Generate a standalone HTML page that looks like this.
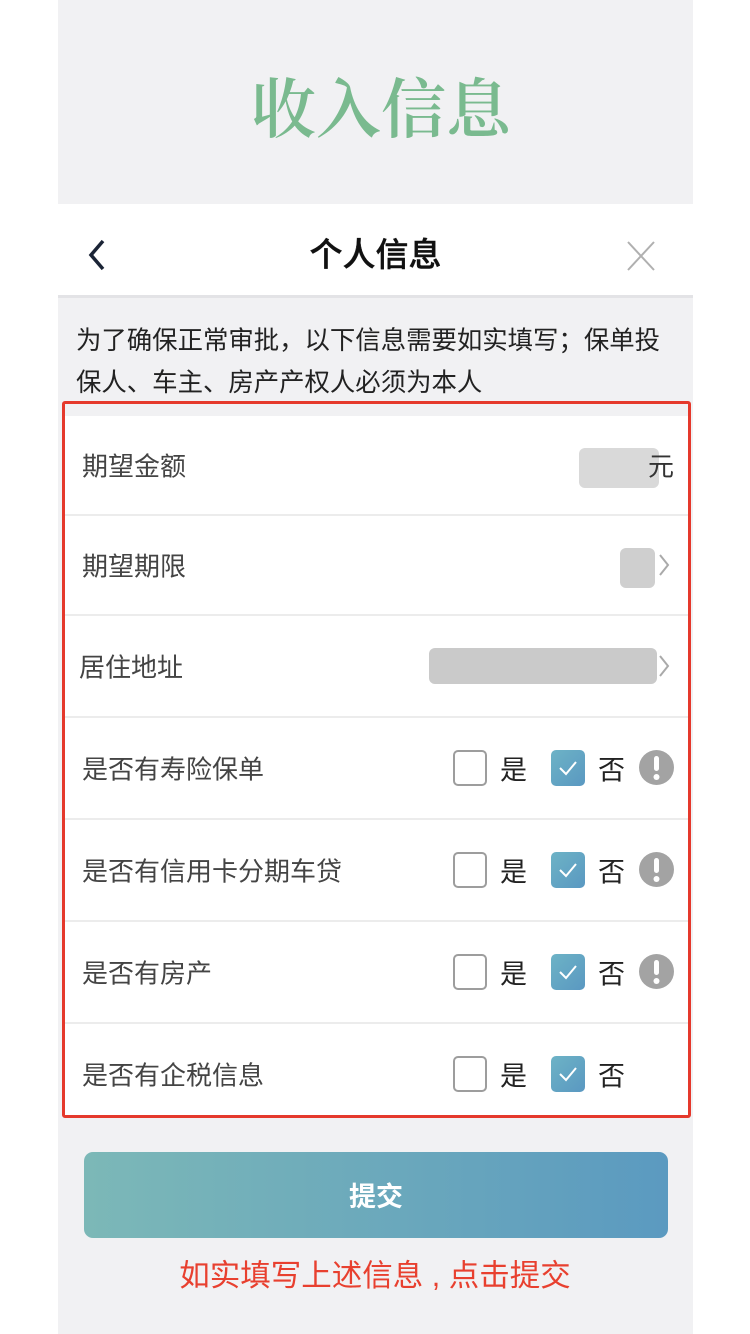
<!DOCTYPE html>
<html><head><meta charset="utf-8"><style>
*{margin:0;padding:0;box-sizing:border-box}
body{width:750px;height:1334px;background:#fff;font-family:"Liberation Sans","Noto Sans CJK SC",sans-serif;position:relative;overflow:hidden}
.col{position:absolute;left:58px;top:0;width:635px;height:1334px;background:#f1f1f3}
.title{position:absolute;left:6px;width:750px;top:62px;text-align:center;font-family:"Noto Serif CJK SC",serif;font-weight:600;font-size:65px;line-height:84px;color:#7aba8f}
.nav{position:absolute;left:58px;top:204px;width:635px;height:94px;background:#fff;border-bottom:3px solid #e3e3e6}
.nav .t{position:absolute;left:0;width:100%;text-align:center;top:31px;font-size:33px;line-height:40px;color:#111;font-weight:500;-webkit-text-stroke:0.4px #111}
.intro{position:absolute;left:76px;top:320px;width:592px;font-size:25.4px;line-height:42px;color:#222}
.box{position:absolute;left:62px;top:401px;width:629px;height:717px;border:3px solid #e5392c;border-radius:3px;background:#fff}
.strip{position:absolute;left:0;top:0;width:100%;height:12px;background:#f1f1f3}
.row{position:absolute;left:0;width:100%;border-bottom:2px solid #ececec}
.lab{position:absolute;left:17px;font-size:26px;color:#444;top:50%;transform:translateY(-50%)}
.cb{position:absolute;width:34px;height:36px;border-radius:5px;top:50%;margin-top:-18px}
.un{left:388px;border:2.5px solid #9d9d9d;background:#fff}
.ck{left:486px;background:linear-gradient(135deg,#6db3c6,#5a98c1)}
.yes,.no{position:absolute;top:50%;transform:translateY(-50%);font-size:27px;color:#222}
.yes{left:435px}.no{left:533px}
.info{position:absolute;left:574px;top:50%;margin-top:-18px;width:35px;height:35px;border-radius:50%;background:#a3a3a3}
.blur{position:absolute;background:#d6d6d6;border-radius:6px}
.chev{position:absolute;right:18px;top:50%;margin-top:-12px}
.btn{position:absolute;left:84px;top:1152px;width:584px;height:86px;border-radius:9px;background:linear-gradient(90deg,#7cb8b7,#5b9ac0);color:#fff;text-align:center;font-size:27px;line-height:90px;font-weight:bold}
.red{position:absolute;left:0;width:750px;text-align:center;top:1254px;font-size:30.5px;line-height:44px;color:#e8402f}
</style></head><body>
<div class="col"></div>
<div class="title">收入信息</div>
<div class="nav">
<svg style="position:absolute;left:28px;top:34px" width="22" height="34" viewBox="0 0 22 34"><path d="M17 3 L5 17 L17 31" fill="none" stroke="#1b2436" stroke-width="3.5"/></svg>
<div class="t">个人信息</div>
<svg style="position:absolute;left:568px;top:36px" width="30" height="32" viewBox="0 0 30 32"><path d="M2 2 L28 30 M28 2 L2 30" stroke="#b0b0b0" stroke-width="2"/></svg>
</div>
<div class="intro">为了确保正常审批，以下信息需要如实填写；保单投<br>保人、车主、房产产权人必须为本人</div>
<div class="box">
<div class="strip"></div>
<div class="row" style="top:12px;height:100px"><div class="lab">期望金额</div>
<div class="blur" style="left:514px;top:32px;width:80px;height:40px;background:#d9d9d9"></div>
<div style="position:absolute;left:583px;top:50%;transform:translateY(-50%);font-size:26px;color:#333">元</div></div>
<div class="row" style="top:112px;height:100px"><div class="lab">期望期限</div>
<div class="blur" style="left:555px;top:32px;width:35px;height:40px;background:#cfcfcf"></div>
<svg class="chev" width="12" height="24" viewBox="0 0 12 24"><path d="M2 2 L10 12 L2 22" fill="none" stroke="#aaa" stroke-width="2"/></svg></div>
<div class="row" style="top:212px;height:102px"><div class="lab" style="left:14px">居住地址</div>
<div class="blur" style="left:364px;top:32px;width:228px;height:36px;background:#bdbdbd;opacity:.8"></div>
<svg class="chev" width="12" height="24" viewBox="0 0 12 24"><path d="M2 2 L10 12 L2 22" fill="none" stroke="#aaa" stroke-width="2"/></svg></div>
<div class="row" style="top:314px;height:102px"><div class="lab">是否有寿险保单</div><div class="cb un"></div><div class="yes">是</div><div class="cb ck"><svg width="34" height="36" viewBox="0 0 34 36"><path d="M9 18 L15 24 L25 12" fill="none" stroke="#fff" stroke-width="2"/></svg></div><div class="no">否</div><div class="info"><svg width="35" height="35"><rect x="15" y="6" width="5" height="15" rx="2.5" fill="#fff"/><circle cx="17.5" cy="27" r="3" fill="#fff"/></svg></div></div>
<div class="row" style="top:416px;height:102px"><div class="lab">是否有信用卡分期车贷</div><div class="cb un"></div><div class="yes">是</div><div class="cb ck"><svg width="34" height="36" viewBox="0 0 34 36"><path d="M9 18 L15 24 L25 12" fill="none" stroke="#fff" stroke-width="2"/></svg></div><div class="no">否</div><div class="info"><svg width="35" height="35"><rect x="15" y="6" width="5" height="15" rx="2.5" fill="#fff"/><circle cx="17.5" cy="27" r="3" fill="#fff"/></svg></div></div>
<div class="row" style="top:518px;height:102px"><div class="lab">是否有房产</div><div class="cb un"></div><div class="yes">是</div><div class="cb ck"><svg width="34" height="36" viewBox="0 0 34 36"><path d="M9 18 L15 24 L25 12" fill="none" stroke="#fff" stroke-width="2"/></svg></div><div class="no">否</div><div class="info"><svg width="35" height="35"><rect x="15" y="6" width="5" height="15" rx="2.5" fill="#fff"/><circle cx="17.5" cy="27" r="3" fill="#fff"/></svg></div></div>
<div class="row" style="top:620px;height:91px;border:none"><div class="lab" style="top:50px">是否有企税信息</div><div class="cb un" style="top:50px"></div><div class="yes" style="top:50px">是</div><div class="cb ck" style="top:50px"><svg width="34" height="36" viewBox="0 0 34 36"><path d="M9 18 L15 24 L25 12" fill="none" stroke="#fff" stroke-width="2"/></svg></div><div class="no" style="top:50px">否</div></div>
</div>
<div class="btn">提交</div>
<div class="red">如实填写上述信息 , 点击提交</div>
</body></html>
